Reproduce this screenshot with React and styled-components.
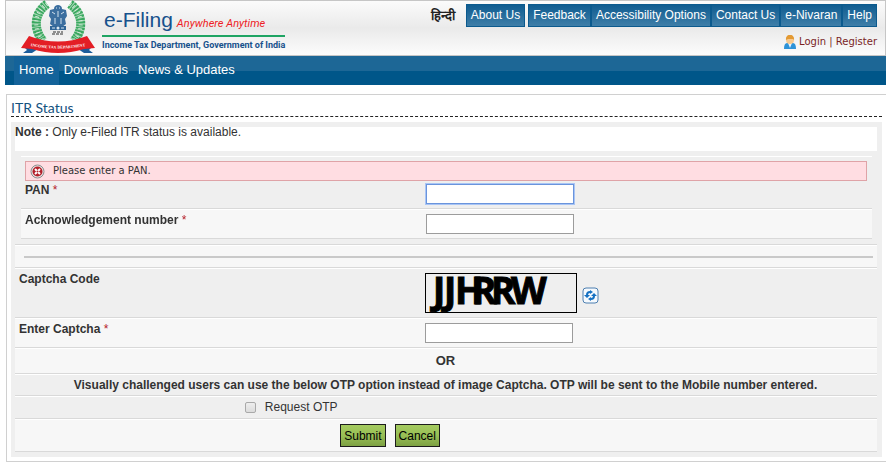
// e-Filing ITR Status Page

// Importing Helpers
import React, { useState } from "react";
import styled, { createGlobalStyle } from "styled-components";

// Global Style Definitions
const GlobalStyle = createGlobalStyle`
  * {
    box-sizing: border-box;
  }

  body {
    margin: 0;
    background: #fff;
    color: #333;
    font-family: "Liberation Sans", Arial, sans-serif;
    font-size: 12px;
    line-height: 14px;
  }
`;

// Header Container Definitions
const HeaderContainer = styled.header`
  display: flex;
  justify-content: space-between;
  height: 56px;
  margin-left: 5px;
  padding: 0 8px 0 15px;
  border: 1px solid #c6c6c6;
  background: linear-gradient(#fbfbfb 0%, #eaeaea 50%, #fcfcfc 100%);
`;

// Brand Style Definitions
const Brand = styled.a`
  display: flex;
  gap: 7px;
  color: #17518c;
  text-decoration: none;
`;

const BrandText = styled.div`
  display: flex;
  flex-direction: column;
  padding-top: 7px;
`;

const BrandTitle = styled.div`
  display: flex;
  align-items: baseline;
  gap: 4px;
  padding: 0 0 0 2px;
  font-size: 21px;
  line-height: 23px;
  border-bottom: 2px solid #1fa463;
`;

const BrandSlogan = styled.em`
  color: #ee1c25;
  font-family: Roboto, sans-serif;
  font-size: 11px;
`;

const BrandOwner = styled.strong`
  font-family: Roboto, sans-serif;
  font-size: 9px;
  line-height: 16px;
`;

// Header Links Style Definitions
const HeaderLinks = styled.div`
  display: flex;
  flex-direction: column;
  align-items: flex-end;
  gap: 8px;
  padding-top: 3px;
`;

const TopMenu = styled.nav`
  display: flex;
  align-items: center;
`;

const HindiLink = styled.a`
  margin-right: 11px;
  color: #222;
  font-size: 13px;
  font-weight: bold;
  text-decoration: none;
`;

const TopLink = styled.a`
  height: 23px;
  margin-right: ${({ $apart }) => ($apart ? "3px" : "0")};
  padding: 0 4px;
  border: 1px solid #0b5a8e;
  background: linear-gradient(#0f5c90, #3f7ea8);
  color: #fff;
  line-height: 20px;
  text-decoration: none;
`;

const LoginBar = styled.div`
  display: flex;
  align-items: center;
  gap: 3px;
  color: #7a1f1f;
  font-family: "DejaVu Sans", Verdana, sans-serif;
  font-size: 10px;
`;

const LoginLink = styled.a`
  color: #7a1f1f;
  text-decoration: none;
`;

// Main Menu Style Definitions
const MainMenu = styled.nav`
  display: flex;
  height: 29px;
  margin-left: 5px;
  padding-left: 9px;
  background: linear-gradient(#1d6796 15px, #005689 15px);
`;

const MainLink = styled.a`
  padding: 0 5px;
  background: ${({ $active }) => ($active ? "#14639a" : "transparent")};
  color: #fff;
  font-size: 13px;
  line-height: 28px;
  text-decoration: none;
`;

// Panel Style Definitions
const Panel = styled.main`
  margin: 9px 0 0 6px;
  padding: 5px 4px 4px;
  border: 1px solid #d0d0d0;
  border-right: none;
`;

const PageTitle = styled.h1`
  margin: 0 0 5px;
  border-bottom: 1px dashed #222;
  color: #14527f;
  font-family: Lato, sans-serif;
  font-size: 14px;
  font-weight: 400;
  line-height: 16px;
`;

const FormBox = styled.form`
  padding: 5px 5px 5px 4px;
  background: #efefef;
`;

const Note = styled.p`
  height: 24px;
  margin: 0 0 5px;
  background: #fff;
  line-height: 11px;
`;

const FieldGroup = styled.div`
  padding: 0 5px 5px 6px;
  border-bottom: 1px solid #d9d9d9;
`;

// Form Row Style Definitions
const Row = styled.div`
  padding: 4px 5px 4px 4px;
  border-top: 1px solid #fff;
  border-bottom: 1px solid #d9d9d9;
  background: ${({ $light }) => ($light ? "#f7f7f7" : "#efefef")};
`;

const Field = styled.div`
  display: grid;
  grid-template-columns: 10fr 11fr;
  align-items: start;
`;

const FieldLabel = styled.label`
  font-weight: bold;
  line-height: 13px;
`;

const Required = styled.span`
  color: #b5202a;
  font-weight: normal;
`;

const TextInput = styled.input`
  width: 148px;
  height: 20px;
  padding: 0;
  border: 1px solid #9c9c9c;
  background: #fff;
  font-family: "Liberation Sans", Arial, sans-serif;
  font-size: 14px;

  &:focus {
    border-color: #6a94dc;
    outline: 1px solid #a9c5f5;
    caret-color: #000;
  }
`;

const ErrorMessage = styled.div`
  display: flex;
  align-items: center;
  gap: 8px;
  height: 20px;
  margin-bottom: 3px;
  padding-left: 4px;
  border: 1px solid #dfa3a7;
  background: #ffdde2;
  font-family: "DejaVu Sans", Verdana, sans-serif;
  font-size: 10px;
`;

const DividerRow = styled(Row)`
  padding: 10px 4px 9px 9px;
`;

const Divider = styled.hr`
  height: 2px;
  margin: 0;
  border: none;
  background: #c9c9c9;
`;

const CaptchaBox = styled.div`
  display: flex;
  align-items: center;
  gap: 5px;
`;

const CaptchaImage = styled.svg`
  width: 152px;
  height: 40px;
  border: 1px solid #000;
  overflow: visible;
`;

const RefreshButton = styled.button`
  display: flex;
  padding: 4px 0 0;
  border: none;
  background: transparent;
  cursor: pointer;
`;

const CenterRow = styled(Row)`
  font-size: ${({ $large }) => ($large ? "13px" : "12px")};
  font-weight: bold;
  line-height: ${({ $large }) => ($large ? "16px" : "12px")};
  text-align: center;
`;

const OtpRow = styled(Row)`
  display: grid;
  grid-template-columns: 4fr 11fr;
  padding: 4px 0;
`;

const OtpLabel = styled.label`
  display: flex;
  grid-column: 2;
  align-items: center;
  gap: 9px;
  line-height: 13px;
`;

const CheckBox = styled.input`
  appearance: none;
  width: 11px;
  height: 11px;
  margin: 0;
  border: 1px solid #a9a9a9;
  border-radius: 2px;
  background: linear-gradient(#eee, #dcdcdc);

  &:checked {
    background: #4a7fb0;
  }
`;

const ButtonRow = styled(Row)`
  display: grid;
  grid-template-columns: 3fr 5fr;
  padding: 4px 0;
`;

const Buttons = styled.div`
  display: flex;
  grid-column: 2;
  gap: 9px;
  padding-left: 2px;
`;

const ActionButton = styled.button`
  height: 23px;
  padding: 0 3px;
  border: 1px solid #1c1c1c;
  background: linear-gradient(#a5cb60 0%, #98bf55 50%, #7da143 100%);
  color: #000;
  font-family: "Liberation Sans", Arial, sans-serif;
  font-size: 12px;
  cursor: pointer;
`;

const EmblemSvg = styled.svg`
  width: 74px;
  height: 54px;
  overflow: visible;
`;

// Department Emblem
const Emblem = () => (
  <EmblemSvg viewBox="0 0 74 54" aria-hidden="true">
    <path
      d="M26 3C13 12 12 28 22 40M49 3c13 9 14 25 4 37"
      fill="none"
      stroke="#a5d6b3"
      strokeWidth="9"
    />
    <path
      d="M26 3C13 12 12 28 22 40M49 3c13 9 14 25 4 37"
      fill="none"
      stroke="#3aa860"
      strokeWidth="9"
      strokeDasharray="2 1"
    />
    <path
      d="M26 3C13 12 12 28 22 40M49 3c13 9 14 25 4 37"
      fill="none"
      stroke="#d5ecdb"
      strokeWidth="4"
      strokeDasharray="1 3"
    />
    <path
      d="M33 8c0-3 2-4 4-4s4 1 4 4l4 1 1 6-2 3 1 5-4 3h-8l-4-3 1-5-2-3 1-6z"
      fill="#3b6e9f"
    />
    <path
      d="M35 7h1m2 0h1M31 11l3 2m9-2-3 2M37 10v6m-3 1v6m6-6v6"
      stroke="#d3e2ee"
      fill="none"
    />
    <path d="M29 25h16v4H29z" fill="#2f6597" />
    <circle cx="37" cy="27" r="1.5" fill="#dbe7f1" />
    <path d="M31 27h3m6 0h3" stroke="#dbe7f1" />
    <path d="M32 31h10M31 33h12" stroke="#333" strokeDasharray="3 1" />
    <path d="M2 45l8-3 7 6-6 4H2l4-3zM72 45l-8-3-7 6 6 4h9l-4-3z" fill="#1d5d9b" />
    <path
      d="M8 35q29 11 58 0l8 12-11 1q-26 8-52 0L0 47z"
      fill="#e31e25"
    />
    <path id="ribbon" d="M4 44q33 7 66 0" fill="none" />
    <text
      fill="#fff"
      fontFamily="Liberation Serif, serif"
      fontSize="4"
      fontWeight="bold"
      textAnchor="middle"
    >
      <textPath href="#ribbon" startOffset="50%">
        INCOME TAX DEPARTMENT
      </textPath>
    </text>
  </EmblemSvg>
);

// User Icon
const UserIcon = () => (
  <svg width="12" height="14" viewBox="0 0 12 14" aria-hidden="true">
    <path d="M0 14c0-4 1-6 3-6h6c2 0 3 2 3 6z" fill="#2e93d8" />
    <path d="M4 8l2 5 2-5z" fill="#e9f4fb" />
    <circle cx="6" cy="5" r="4" fill="#f7c98f" />
    <path d="M2 5c-1-7 9-7 8 0L9 4H4z" fill="#e39a34" />
  </svg>
);

// Error Icon
const ErrorIcon = () => (
  <svg width="15" height="15" viewBox="0 0 15 15" aria-hidden="true">
    <circle cx="7.5" cy="7.5" r="6.5" fill="#e6e6e6" stroke="#8d8d8d" />
    <circle cx="7.5" cy="7.5" r="5" fill="#b3202a" />
    <path d="M5 5l5 5m0-5l-5 5" stroke="#fff" strokeWidth="2" />
    <circle cx="7.5" cy="7.5" r="1" fill="#b3202a" />
  </svg>
);

// Refresh Icon
const RefreshIcon = () => (
  <svg width="17" height="17" viewBox="0 0 17 17" aria-hidden="true">
    <rect x="1" y="1" width="15" height="15" rx="3" fill="#f5f9fd" stroke="#4d7fb0" />
    <path
      d="M5 8c0-2 1-3 3-3M12 9c0 2-1 3-3 3"
      fill="none"
      stroke="#1671c2"
      strokeWidth="2"
    />
    <path d="M2 8h6l-3 3zM9 9h6l-3-3zM8 3l3 2-3 2zM9 10l-3 2 3 2z" fill="#1671c2" />
  </svg>
);

// Menu Entries
const topLinks = [
  "About Us",
  "Feedback",
  "Accessibility Options",
  "Contact Us",
  "e-Nivaran",
  "Help",
];
const mainLinks = ["Home", "Downloads", "News & Updates"];

// Header Component
const Header = () => (
  <HeaderContainer>
    <Brand href="#home">
      <Emblem />
      <BrandText>
        <BrandTitle>
          e-Filing <BrandSlogan>Anywhere Anytime</BrandSlogan>
        </BrandTitle>
        <BrandOwner>Income Tax Department, Government of India</BrandOwner>
      </BrandText>
    </Brand>
    <HeaderLinks>
      <TopMenu>
        <HindiLink href="#hindi" lang="hi">
          हिन्दी
        </HindiLink>
        {topLinks.map((name, i) => (
          <TopLink key={name} href="#top" $apart={i === 0}>
            {name}
          </TopLink>
        ))}
      </TopMenu>
      <LoginBar>
        <UserIcon />
        <span>
          <LoginLink href="#login">Login</LoginLink> |{" "}
          <LoginLink href="#register">Register</LoginLink>
        </span>
      </LoginBar>
    </HeaderLinks>
  </HeaderContainer>
);

// Status Form Component
const StatusForm = () => {
  const [otp, setOtp] = useState(false);

  return (
    <FormBox onSubmit={(e) => e.preventDefault()}>
      <Note>
        <b>Note :</b> Only e-Filed ITR status is available.
      </Note>
      <FieldGroup>
        <Row>
          <ErrorMessage role="alert">
            <ErrorIcon />
            Please enter a PAN.
          </ErrorMessage>
          <Field>
            <FieldLabel htmlFor="pan">
              PAN <Required>*</Required>
            </FieldLabel>
            <TextInput id="pan" type="text" autoFocus />
          </Field>
        </Row>
        <Row $light>
          <Field>
            <FieldLabel htmlFor="ack">
              Acknowledgement number <Required>*</Required>
            </FieldLabel>
            <TextInput id="ack" type="text" />
          </Field>
        </Row>
      </FieldGroup>
      <DividerRow $light>
        <Divider />
      </DividerRow>
      <Row>
        <Field>
          <FieldLabel as="span">Captcha Code</FieldLabel>
          <CaptchaBox>
            <CaptchaImage viewBox="0 0 150 38" role="img">
              <text
                x="7 18 29 46 65 85"
                y="30"
                fontFamily="Open Sans, sans-serif"
                fontSize="37"
                fontWeight="bold"
                stroke="#000"
                strokeWidth="1"
              >
                JJHRRW
              </text>
            </CaptchaImage>
            <RefreshButton type="button" aria-label="Refresh">
              <RefreshIcon />
            </RefreshButton>
          </CaptchaBox>
        </Field>
      </Row>
      <Row $light>
        <Field>
          <FieldLabel htmlFor="captcha">
            Enter Captcha <Required>*</Required>
          </FieldLabel>
          <TextInput id="captcha" type="text" />
        </Field>
      </Row>
      <CenterRow $light $large>
        OR
      </CenterRow>
      <CenterRow>
        Visually challenged users can use the below OTP option instead of image
        Captcha. OTP will be sent to the Mobile number entered.
      </CenterRow>
      <OtpRow>
        <OtpLabel>
          <CheckBox
            type="checkbox"
            checked={otp}
            onChange={() => setOtp(!otp)}
          />
          Request OTP
        </OtpLabel>
      </OtpRow>
      <ButtonRow $light>
        <Buttons>
          <ActionButton type="submit">Submit</ActionButton>
          <ActionButton type="reset">Cancel</ActionButton>
        </Buttons>
      </ButtonRow>
    </FormBox>
  );
};

// Functional Component
const App = () => {
  return (
    <>
      <GlobalStyle />
      <Header />
      <MainMenu>
        {mainLinks.map((name, i) => (
          <MainLink key={name} href="#menu" $active={i === 0}>
            {name}
          </MainLink>
        ))}
      </MainMenu>
      <Panel>
        <PageTitle>ITR Status</PageTitle>
        <StatusForm />
      </Panel>
    </>
  );
};

// Default Export
export default App;
